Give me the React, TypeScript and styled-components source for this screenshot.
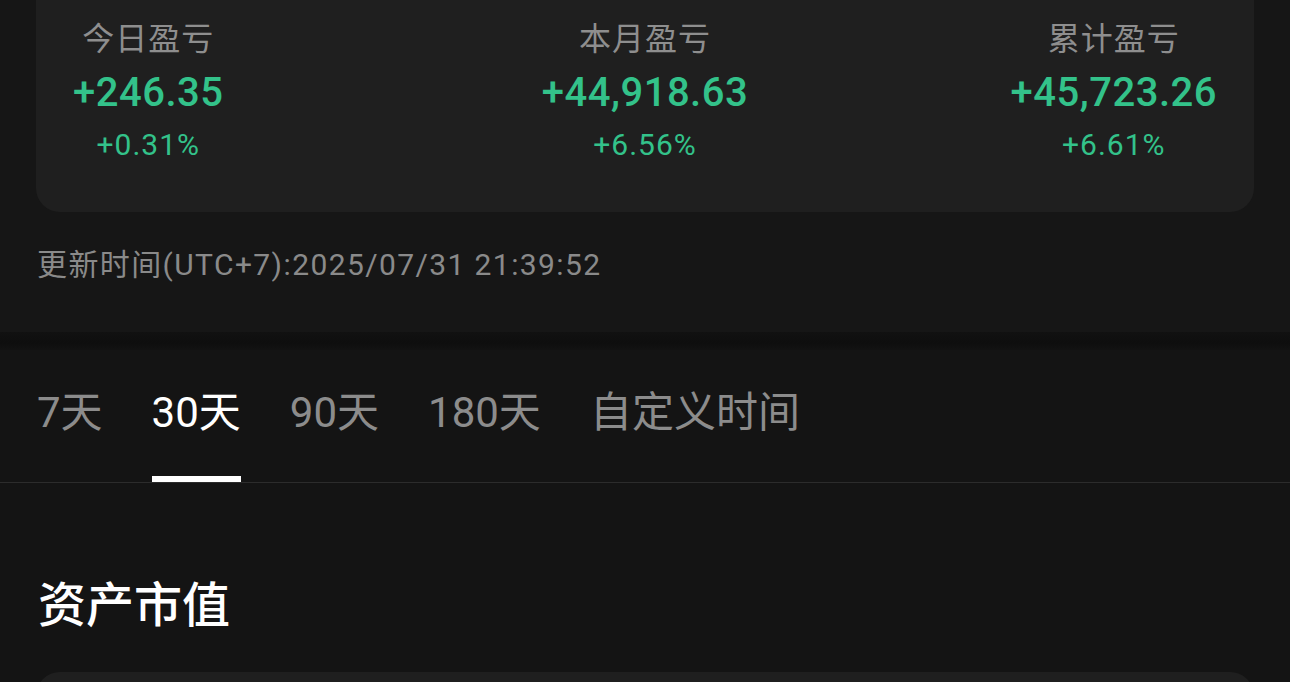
import React, { useState } from "react";
import styled, { createGlobalStyle } from "styled-components";

const Global = createGlobalStyle`
  html, body { margin: 0; padding: 0; background: #141414; }
  body { font-family: Roboto, "Noto Sans CJK SC", sans-serif; overflow: hidden; }
  * { box-sizing: border-box; }
`;

const Page = styled.div`
  width: 1290px;
  height: 682px;
  overflow: hidden;
  background: #141414;
  display: flex;
  flex-direction: column;
  & > * { flex-shrink: 0; }
`;

const TopSection = styled.section`
  background: #161616;
  height: 332px;
  padding: 0 36px;
  display: flex;
  flex-direction: column;
`;

const StatsCard = styled.div`
  background: #1f1f1f;
  border-radius: 0 0 24px 24px;
  height: 212px;
  padding: 19px 37px 0;
  display: grid;
  grid-template-columns: 1fr auto 1fr;
  align-items: start;
`;

const Stat = styled.div<{ $align: "start" | "center" | "end" }>`
  display: flex;
  flex-direction: column;
  align-items: center;
  justify-self: ${(p) => p.$align};
`;

const StatLabel = styled.div`
  font-size: 32px;
  line-height: 40px;
  color: #8e8e8e;
  letter-spacing: 1px;
`;

const StatValue = styled.div`
  margin-top: 10px;
  font-size: 40px;
  line-height: 48px;
  color: #33c28a;
  font-weight: 500;
  letter-spacing: 0.5px;
`;

const StatPct = styled.div`
  margin-top: 10px;
  font-size: 30px;
  line-height: 36px;
  color: #33c28a;
  letter-spacing: 1px;
`;

const UpdateTime = styled.div`
  margin-top: 35px;
  font-size: 30px;
  line-height: 36px;
  color: #8a8a8a;
  letter-spacing: 1.4px;
  padding-left: 1px;
`;

const Band = styled.div`
  height: 18px;
  background: linear-gradient(#111111, #0e0e0e 60%, #121212);
`;

const TabBar = styled.nav`
  height: 133px;
  padding: 0 37px;
  display: flex;
  gap: 49px;
  border-bottom: 1px solid #2c2c2c;
`;

const Tab = styled.div`
  display: flex;
  flex-direction: column;
  cursor: pointer;
`;

const TabLabel = styled.span<{ $active?: boolean }>`
  margin-top: 40px;
  font-size: 42px;
  line-height: 46px;
  color: ${(p) => (p.$active ? "#ffffff" : "#8c8c8c")};
  white-space: nowrap;
`;

const TabIndicator = styled.span<{ $active?: boolean }>`
  margin-top: auto;
  height: 6px;
  background: ${(p) => (p.$active ? "#ffffff" : "transparent")};
`;

const SectionTitle = styled.h2`
  margin: 93px 0 0 38px;
  font-size: 48px;
  line-height: 60px;
  font-weight: 500;
  color: #ffffff;
`;

const AssetCard = styled.div`
  margin: 36px 36px 0;
  height: 200px;
  background: #1f1f1f;
  border-radius: 24px 24px 0 0;
`;

const stats: { label: string; value: string; pct: string; align: "start" | "center" | "end" }[] = [
  { label: "今日盈亏", value: "+246.35", pct: "+0.31%", align: "start" },
  { label: "本月盈亏", value: "+44,918.63", pct: "+6.56%", align: "center" },
  { label: "累计盈亏", value: "+45,723.26", pct: "+6.61%", align: "end" },
];

const tabs = ["7天", "30天", "90天", "180天", "自定义时间"];

export default function App() {
  const [active, setActive] = useState(1);
  return (
    <Page>
      <Global />
      <TopSection>
        <StatsCard>
          {stats.map((s) => (
            <Stat key={s.label} $align={s.align}>
              <StatLabel>{s.label}</StatLabel>
              <StatValue>{s.value}</StatValue>
              <StatPct>{s.pct}</StatPct>
            </Stat>
          ))}
        </StatsCard>
        <UpdateTime>更新时间(UTC+7):2025/07/31 21:39:52</UpdateTime>
      </TopSection>
      <Band />
      <TabBar>
        {tabs.map((t, i) => (
          <Tab key={t} onClick={() => setActive(i)}>
            <TabLabel $active={i === active}>{t}</TabLabel>
            <TabIndicator $active={i === active} />
          </Tab>
        ))}
      </TabBar>
      <SectionTitle>资产市值</SectionTitle>
      <AssetCard />
    </Page>
  );
}
